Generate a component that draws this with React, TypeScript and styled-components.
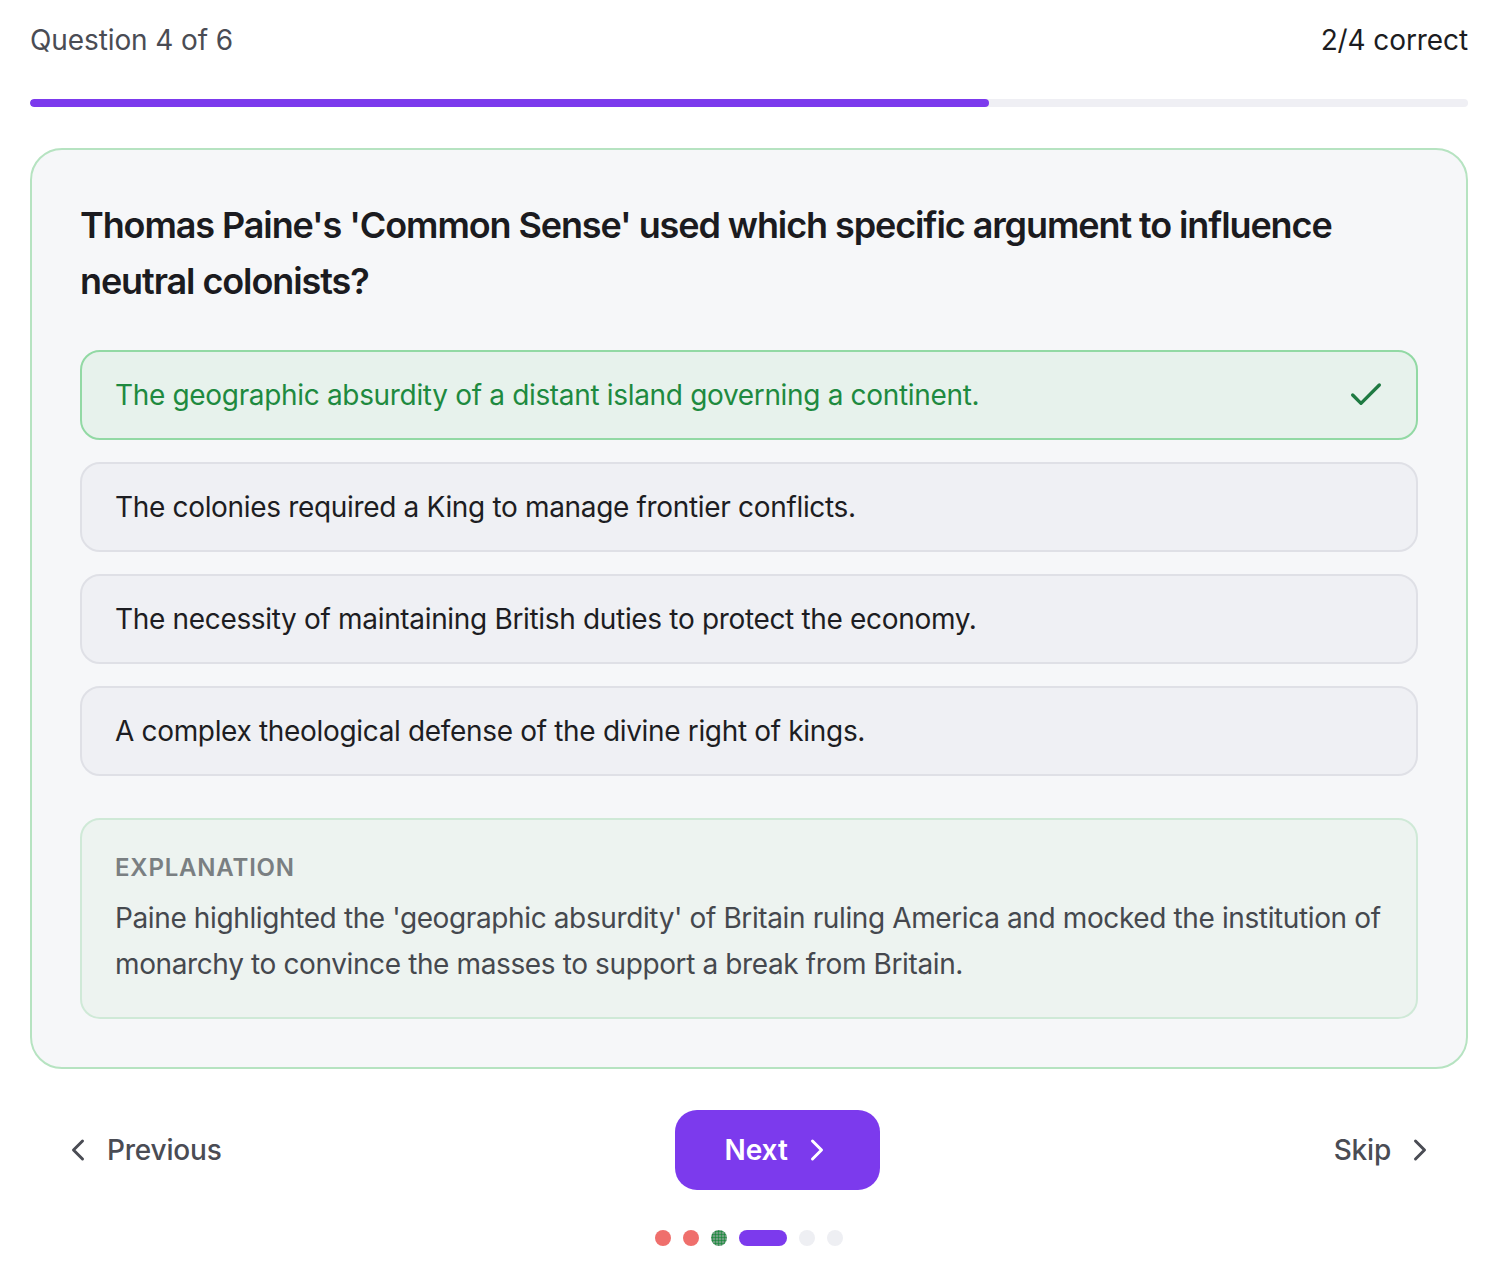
import React from "react";
import styled, { createGlobalStyle, css } from "styled-components";
import { Check, ChevronLeft, ChevronRight } from "lucide-react";

const GlobalStyle = createGlobalStyle`
  * { box-sizing: border-box; }
  html, body { margin: 0; padding: 0; background: #ffffff; }
  body {
    font-family: Inter, "Noto Sans", "Liberation Sans", sans-serif;
    -webkit-font-smoothing: antialiased;
  }
`;

const Page = styled.main`
  width: 100%;
  padding: 19px 30px 20px;
  display: flex;
  flex-direction: column;
`;

const Header = styled.header`
  display: flex;
  justify-content: space-between;
  align-items: center;
  height: 42px;
  font-size: 28px;
  line-height: 42px;
  letter-spacing: -0.1px;
`;

const Counter = styled.span`
  color: #4a4c54;
`;

const Score = styled.span`
  color: #1c1c21;
`;

const Track = styled.div`
  margin-top: 38px;
  height: 8px;
  border-radius: 4px;
  background: #efeff4;
  overflow: hidden;
`;

const Fill = styled.div`
  height: 100%;
  border-radius: 4px;
  background: #7c3aed;
`;

const Card = styled.section`
  margin-top: 41px;
  border: 2px solid #b6e3c1;
  border-radius: 32px;
  background: #f6f7f9;
  padding: 47px 48px 48px;
  display: flex;
  flex-direction: column;
`;

const Title = styled.h1`
  margin: 0 0 41px;
  font-size: 36px;
  line-height: 56px;
  font-weight: 600;
  color: #1b1b20;
  letter-spacing: -1.1px;
`;

const Options = styled.div`
  display: flex;
  flex-direction: column;
  gap: 22px;
`;

const Option = styled.button<{ $correct?: boolean }>`
  height: 90px;
  display: flex;
  align-items: center;
  justify-content: space-between;
  padding: 0 30px 0 33px;
  border-radius: 20px;
  border: 2px solid #dfe0e6;
  background: #eff0f4;
  color: #1d1d22;
  font-family: inherit;
  font-size: 28px;
  letter-spacing: -0.33px;
  text-align: left;
  cursor: pointer;

  ${(p) =>
    p.$correct &&
    css`
      border-color: #92d9a4;
      background: #e7f2ec;
      color: #1e8a3f;
    `}

  svg {
    color: #1f7a42;
    flex-shrink: 0;
  }
`;

const Explanation = styled.div`
  margin-top: 42px;
  border: 2px solid #cfe9d7;
  border-radius: 20px;
  background: #edf3f0;
  padding: 32px 28px 30px 33px;
`;

const Label = styled.div`
  font-size: 24px;
  line-height: 32px;
  font-weight: 600;
  letter-spacing: 0.8px;
  color: #7a7f82;
  text-transform: uppercase;
`;

const Body = styled.p`
  margin: 11px 0 0;
  font-size: 28px;
  line-height: 46px;
  letter-spacing: -0.38px;
  color: #45484e;
`;

const Nav = styled.nav`
  margin-top: 41px;
  display: flex;
  align-items: center;
  justify-content: space-between;
`;

const GhostButton = styled.button`
  display: flex;
  align-items: center;
  gap: 11px;
  height: 80px;
  padding: 0 30px;
  border: none;
  background: transparent;
  color: #4a4c54;
  font-family: inherit;
  font-size: 28px;
  font-weight: 500;
  letter-spacing: -0.2px;
  cursor: pointer;
`;

const PrimaryButton = styled.button`
  display: flex;
  align-items: center;
  gap: 11px;
  height: 80px;
  padding: 0 45px 0 49px;
  border: none;
  border-radius: 22px;
  background: #7c3aed;
  color: #ffffff;
  font-family: inherit;
  font-size: 28px;
  font-weight: 600;
  cursor: pointer;
`;

const Dots = styled.div`
  margin-top: 40px;
  display: flex;
  justify-content: center;
  gap: 12px;
`;

type DotState = "wrong" | "right" | "current" | "todo";

const Dot = styled.span<{ $state: DotState }>`
  width: ${(p) => (p.$state === "current" ? "48px" : "16px")};
  height: 16px;
  border-radius: 8px;
  background: ${(p) =>
    p.$state === "wrong"
      ? "#ef6f6c"
      : p.$state === "current"
      ? "#7c3aed"
      : p.$state === "right"
      ? "radial-gradient(circle, #1e8a3f 0.9px, #6f9f80 1.2px) 0 0 / 3px 3px"
      : "#eeeff3"};
`;

const options = [
  { text: "The geographic absurdity of a distant island governing a continent.", correct: true },
  { text: "The colonies required a King to manage frontier conflicts." },
  { text: "The necessity of maintaining British duties to protect the economy." },
  { text: "A complex theological defense of the divine right of kings." },
];

const progress: DotState[] = ["wrong", "wrong", "right", "current", "todo", "todo"];

export default function App() {
  return (
    <>
      <GlobalStyle />
      <Page>
        <Header>
          <Counter>Question 4 of 6</Counter>
          <Score>2/4 correct</Score>
        </Header>
        <Track>
          <Fill style={{ width: `${(4 / 6) * 100}%` }} />
        </Track>

        <Card>
          <Title>
            Thomas Paine's 'Common Sense' used which specific argument to influence neutral
            colonists?
          </Title>
          <Options>
            {options.map((o) => (
              <Option key={o.text} $correct={o.correct}>
                <span>{o.text}</span>
                {o.correct && <Check size={40} strokeWidth={2} />}
              </Option>
            ))}
          </Options>
          <Explanation>
            <Label>Explanation</Label>
            <Body>
              Paine highlighted the 'geographic absurdity' of Britain ruling America and mocked the
              institution of monarchy to convince the masses to support a break from Britain.
            </Body>
          </Explanation>
        </Card>

        <Nav>
          <GhostButton>
            <ChevronLeft size={36} strokeWidth={2} />
            Previous
          </GhostButton>
          <PrimaryButton>
            Next
            <ChevronRight size={36} strokeWidth={2} />
          </PrimaryButton>
          <GhostButton>
            Skip
            <ChevronRight size={36} strokeWidth={2} />
          </GhostButton>
        </Nav>

        <Dots>
          {progress.map((s, i) => (
            <Dot key={i} $state={s} />
          ))}
        </Dots>
      </Page>
    </>
  );
}
